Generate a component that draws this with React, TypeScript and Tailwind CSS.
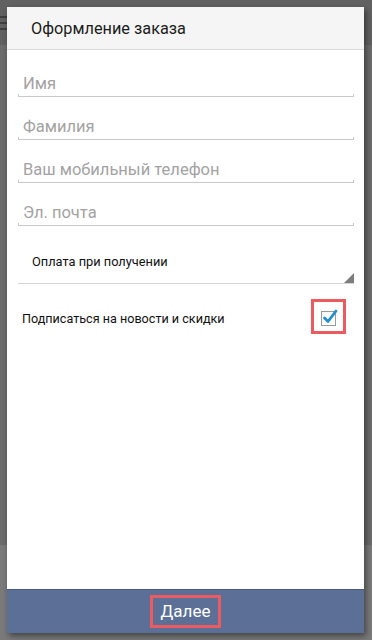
import React from "react";

const fields = ["Имя", "Фамилия", "Ваш мобильный телефон", "Эл. почта"];

function Field({ label }: { label: string }) {
  return (
    <div className="relative h-[43px] flex items-end">
      <div className="w-full border-b border-[#c8c8c8] pl-[5px] pb-[3px] text-[16.5px] leading-[19px] text-[#a3a3a3]">
        {label}
      </div>
      <span className="absolute left-0 bottom-0 h-[3px] w-px bg-[#c8c8c8]" />
      <span className="absolute right-0 bottom-0 h-[3px] w-px bg-[#c8c8c8]" />
    </div>
  );
}

export default function App() {
  return (
    <div
      className="relative w-[372px] h-[640px] overflow-hidden bg-[#6c6c6c]"
      style={{ fontFamily: "Roboto, 'Noto Sans', sans-serif" }}
    >
      {/* app behind the dialog */}
      <div className="absolute left-0 top-0 w-full h-[45px] bg-[#616161]" />
      <div className="absolute left-0 top-[16px] flex flex-col gap-[4px]">
        <span className="block h-[2px] w-[7px] bg-[#3e3e3e]" />
        <span className="block h-[2px] w-[7px] bg-[#3e3e3e]" />
        <span className="block h-[2px] w-[7px] bg-[#3e3e3e]" />
      </div>
      <div className="absolute left-0 top-[545px] w-full h-[95px] bg-[#7a7a7a]" />

      <div className="relative ml-[7px] mt-[7px] w-[357px] h-[626px] flex flex-col bg-white shadow-[2px_3px_6px_rgba(0,0,0,0.45)]">
        <div className="h-[43px] shrink-0 bg-[#f5f5f5] border-b border-[#dcdcdc] flex items-center pl-[24px] pt-[3px] text-[16.3px] text-[#1c1c1c]">
          Оформление заказа
        </div>

        <div className="flex-1 flex flex-col">
          <div className="ml-[11px] mr-[10px] pt-[4px]">
            {fields.map((f) => (
              <Field key={f} label={f} />
            ))}
            <div className="relative h-[58px]">
              <div className="pt-[28px] pl-[14px] text-[12.8px] leading-[16px] text-[#111]">
                Оплата при получении
              </div>
              <div className="absolute left-0 right-0 bottom-0 border-b border-[#d4d4d4]" />
              <svg className="absolute right-0 bottom-[1px]" width="10" height="10" viewBox="0 0 10 10">
                <polygon points="10,0 10,10 0,10" fill="#7d7d7d" />
              </svg>
            </div>
          </div>

          <div className="mt-[15px] flex items-center justify-between pl-[15px] pr-[18px]">
            <span className="pt-[5px] text-[12.6px] text-[#111]">Подписаться на новости и скидки</span>
            <div className="w-[35px] h-[35px] border-[3px] border-[#ec5b60] flex items-center justify-center">
              <svg width="20" height="20" viewBox="0 0 20 20">
                <rect x="2.5" y="4.5" width="14" height="14" fill="#fff" stroke="#9a9a9a" strokeWidth="1" />
                <path d="M5.5 11 L9 14.5 L17 4" fill="none" stroke="#1f8fd0" strokeWidth="2.8" strokeLinecap="round" strokeLinejoin="round" />
              </svg>
            </div>
          </div>
        </div>

        <div className="h-[44px] shrink-0 bg-[#5c6f97] border-t border-[#4a5b80] flex items-center justify-center">
          <div className="w-[71px] h-[33px] border-[3px] border-[#ec5b60] flex items-center justify-center text-[17px] text-white">
            Далее
          </div>
        </div>
      </div>
    </div>
  );
}
